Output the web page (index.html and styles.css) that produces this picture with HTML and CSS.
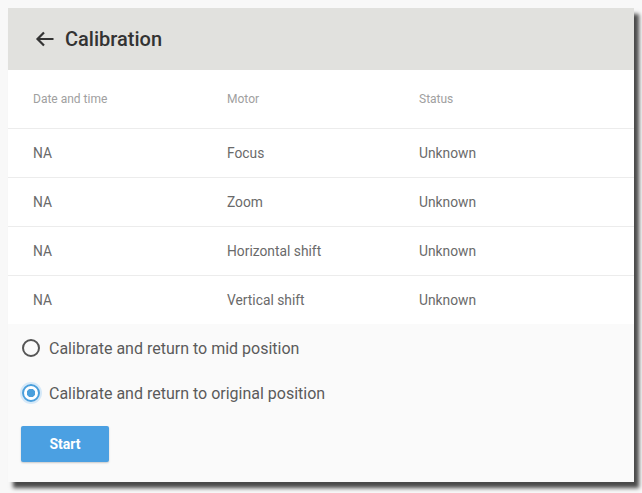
FILE: index.html
```html
<!DOCTYPE html>
<html>
<head>
<meta charset="utf-8">
<link rel="stylesheet" href="styles.css">
</head>
<body>
<div class="card">
  <header class="topbar">
    <svg class="back" width="19" height="16" viewBox="0 0 19 16"><path d="M18.5 8H2.5M9 1.5L2.5 8 9 14.5" fill="none" stroke="#333" stroke-width="2.2"/></svg>
    <h1 class="title">Calibration</h1>
  </header>
  <div class="table">
    <div class="row head"><span>Date and time</span><span>Motor</span><span>Status</span></div>
    <div class="row"><span>NA</span><span>Focus</span><span>Unknown</span></div>
    <div class="row"><span>NA</span><span>Zoom</span><span>Unknown</span></div>
    <div class="row"><span>NA</span><span>Horizontal shift</span><span>Unknown</span></div>
    <div class="row"><span>NA</span><span>Vertical shift</span><span>Unknown</span></div>
  </div>
  <div class="options">
    <label class="opt"><span class="radio"></span>Calibrate and return to mid position</label>
    <label class="opt"><span class="radio on"></span>Calibrate and return to original position</label>
    <button class="start">Start</button>
  </div>
</div>
</body>
</html>
```
FILE: styles.css
```css
html, body { margin: 0; padding: 0; }
body {
  background: #f8f8f8;
  font-family: Roboto, "Liberation Sans", sans-serif;
  padding: 8px 0 0 8px;
  height: 493px;
  box-sizing: border-box;
}
.card {
  width: 626px;
  height: 474px;
  background: #fafafa;
  box-shadow: 5px 6px 4px #4a4a4a;
  display: flex;
  flex-direction: column;
}
.topbar {
  height: 62px;
  background: #e1e1de;
  display: flex;
  align-items: center;
  padding-left: 27px;
  gap: 11px;
  box-sizing: border-box;
}
.title {
  margin: 0;
  font-size: 20px;
  font-weight: 500;
  color: #333;
}
.table { background: #fff; }
.row {
  display: grid;
  grid-template-columns: 194px 192px 1fr;
  padding-left: 25px;
  height: 49px;
  align-items: center;
  border-top: 1px solid #ececec;
  font-size: 13.8px;
  color: #6a6a6a;
  box-sizing: border-box;
}
.row.head {
  height: 58px;
  border-top: none;
  font-size: 12px;
  color: #a0a0a0;
}
.options {
  display: flex;
  flex-direction: column;
  align-items: flex-start;
  padding: 12px 0 0 14px;
}
.opt {
  display: flex;
  align-items: center;
  font-size: 16px;
  color: #5a5a5a;
  height: 24px;
  margin-bottom: 21px;
}
.radio {
  width: 14px;
  height: 14px;
  border: 2px solid #555;
  border-radius: 50%;
  margin-right: 9px;
  box-sizing: content-box;
}
.radio.on {
  border-color: #4a9fdc;
  background: radial-gradient(circle, #4a9fdc 0 4px, #fff 4.5px);
  box-shadow: 0 0 0 2px #d6e9f8;
}
.start {
  margin-left: -1px;
  width: 88px;
  height: 36px;
  background: #4ba0e2;
  color: #fff;
  border: none;
  border-radius: 2px;
  font-family: Roboto, "Liberation Sans", sans-serif;
  font-weight: 700;
  font-size: 14px;
  box-shadow: 0 1px 2px rgba(0,0,0,0.2);
}
```
